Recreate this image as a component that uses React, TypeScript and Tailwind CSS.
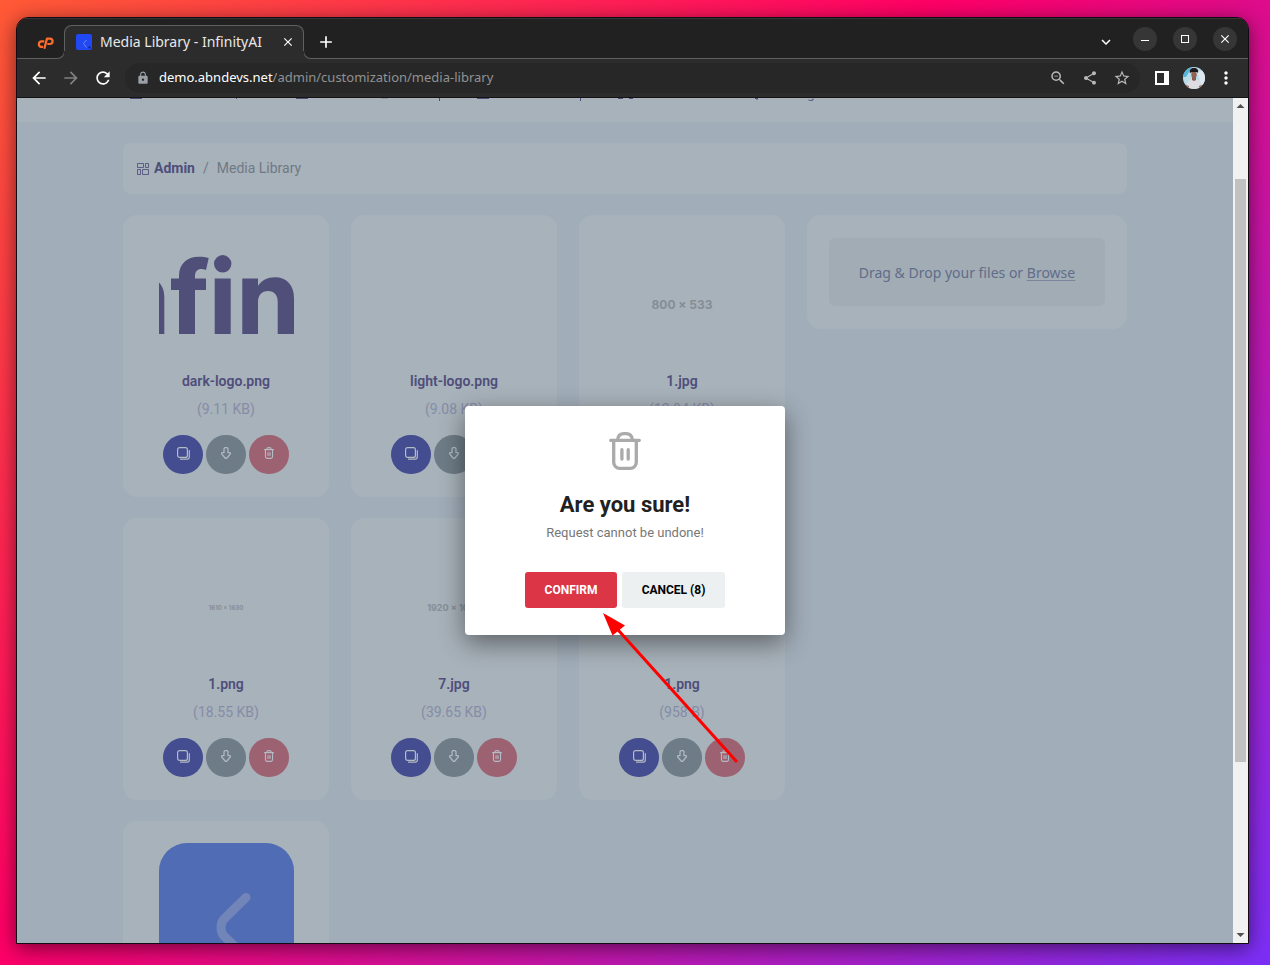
import React from "react";
import {
  MdArrowBack,
  MdArrowForward,
  MdRefresh,
  MdLock,
  MdOutlineZoomOut,
  MdShare,
  MdStarBorder,
  MdMoreVert,
  MdClose,
  MdAdd,
  MdKeyboardArrowDown,
} from "react-icons/md";

type MediaFile = { id: number; name?: string; size?: string; preview: React.ReactNode };

const TrashIcon = ({ className, strokeWidth }: { className: string; strokeWidth: number }) => (
  <svg viewBox="0 0 32 38" className={className} fill="none" stroke="currentColor" strokeWidth={strokeWidth} strokeLinecap="round" strokeLinejoin="round" aria-hidden="true">
    <path d="M1.700 8.300h28.600M4.700 8.500v21.800a6 6 0 0 0 6 6h10.600a6 6 0 0 0 6-6V8.500M8.500 8c.4-4 3-6.300 6.500-6.300h2c3.500 0 6.100 2.300 6.500 6.300" />
    <path d="M12.900 17.700v9.300M19.200 17.700v9.300" />
  </svg>
);

const CopyIcon = () => (
  <svg viewBox="0 0 13 13" className="size-[13px]" fill="none" stroke="currentColor" strokeWidth="1.200" strokeLinecap="round" aria-hidden="true">
    <rect x="0.600" y="0.600" width="9.800" height="9.800" rx="2" />
    <path d="M12.300 3.500V10a2.200 2.200 0 0 1-2.200 2.200H3.500" />
  </svg>
);

const DownIcon = () => (
  <svg viewBox="0 0 10 12" className="h-3 w-[10px]" fill="none" stroke="currentColor" strokeWidth="1.200" strokeLinejoin="round" aria-hidden="true">
    <path d="M3 5.700V1.900A1.300 1.300 0 0 1 4.300.6h1.400A1.300 1.300 0 0 1 7 1.900v3.800h1.600c.8 0 1.200.8.6 1.400L5.900 11a1.200 1.200 0 0 1-1.800 0L.8 7.100C.2 6.500.600 5.700 1.400 5.700z" />
  </svg>
);

const GridIcon = () => (
  <svg viewBox="0 0 12 12" className="size-3" fill="none" stroke="currentColor" strokeOpacity="0.850" aria-hidden="true">
    <path d="M.5.5h6v4h-6zM8.500.5h3v4h-3zM.5 6.500h3v5h-3zM5.500 6.500h6v5h-6z" />
  </svg>
);

const DarkLogo = () => (
  <svg viewBox="0 0 135 135" className="size-full text-[#504f7a]" fill="currentColor" role="img" aria-label="Dark logo">
    <g transform="translate(0 7)">
      <path d="M0 38.500c3.800 4 5.300 9 5.300 15.500v36H0z" />
      <path d="M20 90V46h-8V34.500h8V32c0-12 7.500-19.300 20-19.300 3.500 0 6.700.4 9.700 1.300L47 26c-6-2.500-11-.5-11 6v2.500h11V46H36v44z" />
      <circle cx="63.700" cy="19.800" r="8.700" />
      <path d="M55.700 34.500h16V90h-16zM83.300 34.500h15.700V42c3.500-5.500 9.500-8.700 17-8.700 12 0 19 8 19 21V90h-16.300V58c0-7-3.300-11-9.700-11-6.300 0-10 4.200-10 11v32H83.300z" />
    </g>
  </svg>
);

const AppMark = () => (
  <svg viewBox="0 0 135 135" className="size-full" role="img" aria-label="App icon">
    <rect width="135" height="135" rx="28" fill="#506cb5" />
    <path d="M87 54.500 65 76c-4 4-4 13 0 17l22 21" fill="none" stroke="#7185b8" strokeWidth="9" strokeLinecap="round" />
  </svg>
);

const files: MediaFile[] = [
  { id: 1, name: "dark-logo.png", size: "(9.11 KB)", preview: <DarkLogo /> },
  { id: 2, name: "light-logo.png", size: "(9.08 KB)", preview: null },
  { id: 3, name: "1.jpg", size: "(12.94 KB)", preview: <span className="text-[12px]">800 × 533</span> },
  { id: 4, name: "1.png", size: "(18.55 KB)", preview: <span className="text-[6px]">1610 × 1630</span> },
  { id: 5, name: "7.jpg", size: "(39.65 KB)", preview: <span className="text-[9px]">1920 × 1080</span> },
  { id: 6, name: "1.png", size: "(958 B)", preview: null },
  { id: 7, preview: <AppMark /> },
];

const MediaCard = ({ file }: { file: MediaFile }) => (
  <article className="flex flex-col items-center rounded-[14px] bg-[#a8b2ba] px-5 pt-[22px] pb-[23px]">
    <div className="flex size-[135px] items-center justify-center font-[Inter,sans-serif] font-bold whitespace-nowrap text-[#848e96]">{file.preview}</div>
    {file.name && (
      <>
        <h2 className="text-[14px] leading-[18px] font-semibold text-[#4f4e7b]">{file.name}</h2>
        <p className="mt-2 text-[14px] leading-[22px] text-[#858ca8]">{file.size}</p>
      </>
    )}
    <div className="mt-[15px] flex gap-[3px] text-[#b3bcc4]">
      <button type="button" aria-label="Copy link" className="flex h-[39px] w-10 items-center justify-center rounded-full bg-[#454d91] pb-[3px]"><CopyIcon /></button>
      <button type="button" aria-label="Download" className="flex h-[39px] w-10 items-center justify-center rounded-full bg-[#6e7c87] pb-[3px]"><DownIcon /></button>
      <button type="button" aria-label="Delete" className="flex h-[39px] w-10 items-center justify-center rounded-full bg-[#9d6271] pb-[3px]"><TrashIcon className="h-3 w-[10px]" strokeWidth={3.5} /></button>
    </div>
  </article>
);

const TabStrip = () => (
  <div className="flex h-[41px] shrink-0 items-end border-t border-[#343434] bg-[#212121] text-white">
    <div className="flex h-full w-10 items-center justify-end border-b border-[#606060] pt-2 pr-[3px]">
      <svg viewBox="0 0 17 12" className="h-3 w-[17px]" fill="none" stroke="#ff6c2c" strokeWidth="2.200" strokeLinejoin="round" aria-label="cPanel" role="img">
        <path d="M7.300 4.300H4.200a2.900 2.900 0 0 0-.3 5.600H6" />
        <path d="M7.300 11.800 10 1.600h2.900a2.700 2.700 0 0 1 0 5.400h-2.600" />
      </svg>
    </div>
    <span className="-mr-px size-2 bg-[#2c2c2c]"><span className="block size-full rounded-br-lg border-r border-b border-[#606060] bg-[#212121]" /></span>
    <div className="relative flex h-[34px] w-60 items-center rounded-t-lg bg-[#2c2c2c] pr-[9px] pl-3">
      <span className="absolute inset-x-0 top-0 h-[26px] rounded-t-lg border-x border-t border-[#606060]" />
      <svg viewBox="0 0 16 16" className="size-4 shrink-0" aria-hidden="true">
        <rect width="16" height="16" rx="2" fill="#2148f3" />
        <path d="m10.500 6-3 3.500 3 4" fill="none" stroke="#6f87f2" />
        <circle cx="13.500" cy="13.500" r="1" fill="#171d47" />
      </svg>
      <span className="ml-2 flex-1 pb-[2px] font-['Noto_Sans',sans-serif] text-[14px] whitespace-nowrap text-[#e8e8e8]">Media Library - InfinityAI</span>
      <button type="button" aria-label="Close tab"><MdClose className="size-[14px]" /></button>
    </div>
    <span className="-ml-px size-2 bg-[#2c2c2c]"><span className="block size-full rounded-bl-lg border-b border-l border-[#606060] bg-[#212121]" /></span>
    <div className="flex h-full flex-1 items-center gap-4 border-b border-[#606060] pr-[11px] pl-[5px]">
      <button type="button" aria-label="New tab" className="mr-auto pt-[6px]"><MdAdd className="size-5" /></button>
      <button type="button" aria-label="Search tabs" className="pt-[6px] pr-[2px]"><MdKeyboardArrowDown className="size-[18px]" /></button>
      <button type="button" aria-label="Minimize" className="flex size-6 items-center justify-center rounded-full bg-[#363636] pt-1"><span className="h-px w-2 bg-white" /></button>
      <button type="button" aria-label="Maximize" className="flex size-6 items-center justify-center rounded-full bg-[#363636]"><span className="size-2 border border-white" /></button>
      <button type="button" aria-label="Close" className="flex size-6 items-center justify-center rounded-full bg-[#363636]"><MdClose className="size-[14px]" /></button>
    </div>
  </div>
);

const Avatar = () => (
  <svg viewBox="0 0 22 22" className="size-[22px] rounded-full" aria-hidden="true">
    <rect width="22" height="22" fill="#b9dcea" />
    <path d="M0 0h9L3 10H0z" fill="#56b4d8" />
    <path d="M14 4h8v14h-4z" fill="#dde9ee" />
    <path d="M3 22c0-6 2-9 6-10h4c4 1 6 4 6 10z" fill="#dcdce2" />
    <path d="M9 9h4v4l-2 1-2-1z" fill="#8a5c48" />
    <ellipse cx="11" cy="7.500" rx="2.700" ry="3.800" fill="#8f6350" />
    <path d="M7 6c-1-3 1-5 4-5s5 2 4 5l-1-1h-5z" fill="#1e1a1c" />
    <path d="m1 22 2-4 3 1v3zM21 22l-2-4-3 1v3z" fill="#9b6a52" />
  </svg>
);

const Toolbar = () => (
  <div className="flex h-[39px] shrink-0 items-center border-b border-[#141414] bg-[#2c2c2c] px-[6px] text-white">
    <button type="button" aria-label="Back" className="flex size-8 items-center justify-center"><MdArrowBack className="size-5" /></button>
    <button type="button" aria-label="Forward" className="flex size-8 items-center justify-center text-[#808080]"><MdArrowForward className="size-5" /></button>
    <button type="button" aria-label="Reload" className="flex size-8 items-center justify-center"><MdRefresh className="size-5" /></button>
    <div className="mx-[6px] flex h-[30px] flex-1 items-center rounded-full bg-[#272727] pr-[2px] pl-[11px] text-[#b8b8b8]">
      <MdLock className="size-[14px] shrink-0 text-[#9aa0a6]" />
      <a href="#media-library" className="ml-[9px] flex-1 font-['Noto_Sans',sans-serif] text-[13px] text-[#929292]"><span className="text-white">demo.abndevs.net</span>/admin/customization/media-library</a>
      <button type="button" aria-label="Zoom" className="flex size-8 items-center justify-center"><MdOutlineZoomOut className="size-[18px]" /></button>
      <button type="button" aria-label="Share" className="flex size-8 items-center justify-center"><MdShare className="size-4" /></button>
      <button type="button" aria-label="Bookmark" className="flex size-8 items-center justify-center"><MdStarBorder className="size-[18px]" /></button>
    </div>
    <button type="button" aria-label="Side panel" className="flex size-8 items-center justify-center"><span className="size-[14px] border-2 border-r-[5px] border-white" /></button>
    <button type="button" aria-label="Profile" className="flex size-8 items-center justify-center"><Avatar /></button>
    <button type="button" aria-label="Menu" className="flex size-8 items-center justify-center"><MdMoreVert className="size-5" /></button>
  </div>
);

const NavEdge = () => (
  <div className="h-6 shrink-0 bg-[#a8b2ba]">
    <div className="mx-auto max-w-[1004px]">
      <svg viewBox="0 0 1004 4" className="h-1 w-full" stroke="#4f4e7b" aria-hidden="true">
        <path d="M7 .5h12M113 .5h1M173 .5h12M354 .5h12M495 .5h5M506 .5h4M632 .5h3" />
        <path d="M316.500 0v3M457.500 0v3M634 0v2M690 .5V2q-2.500 1-4.500 0" fill="none" />
        <path d="M258 .5h7" stroke="#9199a8" />
      </svg>
    </div>
  </div>
);

const Scrollbar = () => (
  <div className="flex w-[15px] shrink-0 flex-col items-center bg-[#f1f1f1]" aria-hidden="true">
    <svg viewBox="0 0 15 17" className="h-[17px] w-[15px] shrink-0"><path d="m7.500 6 4 4h-8z" fill="#505050" /></svg>
    <span className="w-full flex-[64]" />
    <span className="w-[11px] flex-[583] bg-[#c1c1c1]" />
    <span className="w-full flex-[164]" />
    <svg viewBox="0 0 15 17" className="h-[17px] w-[15px] shrink-0"><path d="m7.500 11 4-4h-8z" fill="#505050" /></svg>
  </div>
);

const ConfirmDialog = () => (
  <div className="absolute inset-0 flex items-center justify-center">
    <section role="alertdialog" aria-labelledby="confirm-title" aria-describedby="confirm-text" className="relative flex w-80 flex-col items-center rounded bg-white pt-[26px] pb-[27px] shadow-[0_8px_26px_0_rgba(0,0,0,0.45)]">
      <TrashIcon className="h-[38px] w-8 text-[#aaaaaa]" strokeWidth={3.3} />
      <h1 id="confirm-title" className="mt-5 text-[22px] leading-[30px] font-bold text-[#212121]">Are you sure!</h1>
      <p id="confirm-text" className="mt-[3px] text-[13px] leading-5 text-[#777777]">Request cannot be undone!</p>
      <div className="mt-[29px] flex gap-[5px] text-[12px] font-bold">
        <button type="button" className="h-9 w-[92px] rounded-[3px] bg-[#dc3545] text-white">CONFIRM</button>
        <button type="button" className="h-9 w-[103px] rounded-[3px] bg-[#ecf0f1] text-black">CANCEL (8)</button>
      </div>
      <svg viewBox="0 0 136 151" className="pointer-events-none absolute top-[207px] left-[138px] h-[151px] w-[136px]" aria-hidden="true">
        <path d="M12 13.500 134 149" stroke="#ff0000" strokeWidth="3" />
        <path d="M0 0 22 12.500 9.500 22.500z" fill="#ff0000" />
      </svg>
    </section>
  </div>
);

export default function App() {
  return (
    <div className="h-screen overflow-hidden bg-[linear-gradient(135deg,#ff5a36_0%,#ff0066_42%,#7b2ff7_100%)] pt-[17px] pr-[21px] pb-[21px] pl-4 font-[Roboto,sans-serif]">
      <div className="flex h-full flex-col overflow-hidden rounded-t-xl border border-[#120b14] shadow-[0_4px_20px_rgba(0,0,0,0.55)]">
        <TabStrip />
        <Toolbar />
        <div className="flex min-h-0 flex-1">
          <main className="relative flex flex-1 flex-col overflow-hidden bg-[#a1adb9]">
            <NavEdge />
            <div className="mx-auto mt-[21px] flex w-full max-w-[1004px] flex-col gap-[21px]">
              <nav aria-label="Breadcrumb" className="flex h-[51px] items-center rounded-lg bg-[#a8b2ba] px-[14px] text-[14px] text-[#6f7985]">
                <a href="#admin" className="flex items-center gap-[5px] font-bold text-[#4f4e7b]"><GridIcon />Admin</a>
                <span className="mx-2">/</span>
                <span>Media Library</span>
              </nav>
              <div className="flex items-start gap-[22px]">
                <div className="grid flex-1 grid-cols-3 gap-x-[22px] gap-y-[21px]">
                  {files.map((file) => (
                    <MediaCard key={file.id} file={file} />
                  ))}
                </div>
                <aside className="w-80 shrink-0 rounded-[14px] bg-[#a8b2ba] px-[22px] py-[23px]">
                  <div className="flex h-[68px] items-center justify-center rounded-md bg-[#a2acb4] font-['Noto_Sans',sans-serif] text-[14px] text-[#606d8b]">
                    <span>Drag &amp; Drop your files or <button type="button" className="underline decoration-[#7a849a] underline-offset-2">Browse</button></span>
                  </div>
                </aside>
              </div>
            </div>
            <ConfirmDialog />
          </main>
          <Scrollbar />
        </div>
      </div>
    </div>
  );
}
